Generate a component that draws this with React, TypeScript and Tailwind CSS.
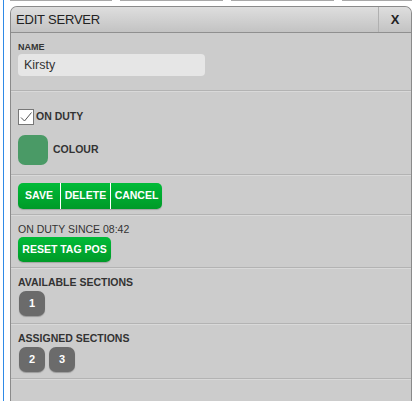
import React from 'react';

/* Edit server dialog */

function Divider() {
  return <div className="h-px bg-[#b3b3b3] border-b border-[#d9d9d9] box-content" />;
}

function SectionBadge({ n }: { n: string }) {
  return (
    <div className="w-[26px] h-[25px] rounded-[7px] bg-[#6b6b6b] text-white text-[11px] font-bold flex items-center justify-center shadow-[0_1px_1px_rgba(0,0,0,0.25)]">
      {n}
    </div>
  );
}

export default function App() {
  const font = { fontFamily: '"Liberation Sans", Arial, sans-serif' };
  return (
    <div className="w-[412px] h-[401px] bg-white flex overflow-hidden" style={font}>
      {/* left page edge */}
      <div className="w-[3px]" />
      <div className="w-px bg-[#2f8ae6]" />
      <div className="w-[6px]" />

      <div className="flex-1 flex flex-col">
        {/* tops of tabs behind the dialog */}
        <div className="h-[6px] flex gap-[8px]">
          <div className="w-[102px] border-t border-[#a8a8a8]" />
          <div className="w-[103px] border-t border-[#a8a8a8]" />
          <div className="w-[103px] border-t border-[#a8a8a8]" />
          <div className="flex-1 border-t border-[#a8a8a8]" />
        </div>

        {/* dialog */}
        <div className="flex-1 flex flex-col border border-b-0 border-[#8a8a8a] rounded-t-[7px] bg-[#cccccc] overflow-hidden">
          <div className="h-[26px] flex border-b border-[#8f8f8f] bg-gradient-to-b from-[#dedede] to-[#c3c3c3]">
            <div className="flex-1 flex items-center pl-[5px] text-[13px] text-[#222] tracking-[-0.2px]">EDIT SERVER</div>
            <div className="w-[33px] border-l border-[#b0b0b0] flex items-center justify-center text-[13px] font-bold text-[#222]">
              X
            </div>
          </div>

          {/* name */}
          <div className="h-[57px] px-[7px] pt-[9px]">
            <div className="text-[9px] font-bold text-[#333] leading-[10px]">NAME</div>
            <div className="mt-[2px] w-[187px] h-[22px] rounded-[4px] bg-[#e6e6e6] flex items-center pl-[6px] text-[12.5px] text-[#333]">
              Kirsty
            </div>
          </div>
          <Divider />

          {/* on duty / colour */}
          <div className="h-[82px] px-[7px] pt-[17px]">
            <div className="flex items-center gap-[2px]">
              <div className="w-[16px] h-[16px] bg-white border border-[#777] flex items-center justify-center">
                <svg width="14" height="14" viewBox="0 0 14 14">
                  <path d="M2 7.5 L5.5 11 L12.5 2.5" fill="none" stroke="#555" strokeWidth="1" />
                </svg>
              </div>
              <span className="text-[10.5px] font-bold text-[#333]">ON DUTY</span>
            </div>
            <div className="mt-[10px] flex items-center gap-[5px]">
              <div className="w-[30px] h-[30px] rounded-[7px] bg-[#4a9a66]" />
              <span className="text-[10.5px] font-bold text-[#333]">COLOUR</span>
            </div>
          </div>
          <Divider />

          {/* actions */}
          <div className="h-[38px] px-[7px] pt-[6px]">
            <div className="inline-flex h-[26px] rounded-[5px] overflow-hidden text-white text-[10.5px] font-bold shadow-[0_1px_1px_rgba(0,0,0,0.2)]">
              <div className="w-[42px] flex items-center justify-center bg-gradient-to-b from-[#00bb38] to-[#009a28]">SAVE</div>
              <div className="w-px bg-white" />
              <div className="w-[49px] flex items-center justify-center bg-gradient-to-b from-[#00bb38] to-[#009a28]">DELETE</div>
              <div className="w-px bg-white" />
              <div className="w-[51px] flex items-center justify-center bg-gradient-to-b from-[#00bb38] to-[#009a28]">CANCEL</div>
            </div>
          </div>
          <Divider />

          {/* on duty since */}
          <div className="h-[51px] px-[7px] pt-[7px]">
            <div className="text-[10.5px] text-[#333] leading-[13px]">ON DUTY SINCE 08:42</div>
            <div className="mt-[1px] w-[93px] h-[25px] rounded-[5px] bg-gradient-to-b from-[#00bb38] to-[#009a28] text-white text-[10.5px] font-bold flex items-center justify-center shadow-[0_1px_1px_rgba(0,0,0,0.2)]">
              RESET TAG POS
            </div>
          </div>
          <Divider />

          {/* available sections */}
          <div className="h-[54px] px-[7px] pt-[7px]">
            <div className="text-[10.5px] font-bold text-[#333] leading-[13px]">AVAILABLE SECTIONS</div>
            <div className="mt-[2px] ml-px flex gap-[4px]">
              <SectionBadge n="1" />
            </div>
          </div>
          <Divider />

          {/* assigned sections */}
          <div className="h-[53px] px-[7px] pt-[7px]">
            <div className="text-[10.5px] font-bold text-[#333] leading-[13px]">ASSIGNED SECTIONS</div>
            <div className="mt-[2px] ml-px flex gap-[4px]">
              <SectionBadge n="2" />
              <SectionBadge n="3" />
            </div>
          </div>
          <Divider />
          <div className="flex-1" />
        </div>
      </div>
    </div>
  );
}
